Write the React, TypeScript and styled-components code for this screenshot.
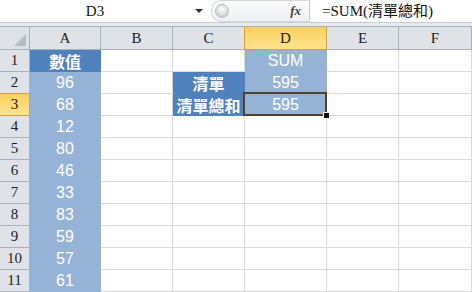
import React from 'react';
import styled, { createGlobalStyle } from 'styled-components';

const GlobalStyle = createGlobalStyle`
  html, body {
    margin: 0;
    padding: 0;
    background: #fff;
    overflow: hidden;
  }
`;

const Page = styled.div`
  width: 472px;
  height: 292px;
  overflow: hidden;
  display: flex;
  flex-direction: column;
  font-family: 'Liberation Serif', 'Noto Sans CJK TC', serif;
`;

const FormulaBar = styled.div`
  display: flex;
  align-items: center;
  height: 22px;
  border-bottom: 1px solid #c9cdd2;
  background: #fff;
  flex-shrink: 0;
`;

const NameBox = styled.div`
  width: 190px;
  text-align: center;
  font-size: 15px;
  color: #111;
`;

const DropArrow = styled.div`
  width: 0;
  height: 0;
  margin-left: 5px;
  border-left: 4px solid transparent;
  border-right: 4px solid transparent;
  border-top: 4px solid #333;
`;

const FxArea = styled.div`
  display: flex;
  align-items: center;
  height: 20px;
  margin-left: 8px;
  width: 97px;
  border-radius: 10px 0 0 10px;
  border: 1px solid #d2d5da;
  border-right: none;
  background: linear-gradient(#fbfbfb, #eef0f2);
`;

const Knob = styled.div`
  width: 12px;
  height: 12px;
  margin-left: 3px;
  border-radius: 50%;
  background: radial-gradient(circle at 50% 35%, #ffffff, #c9ccd1 80%);
  border: 1px solid #b8bcc2;
`;

const Fx = styled.span`
  margin-left: auto;
  margin-right: 8px;
  font-family: 'Liberation Serif', serif;
  font-style: italic;
  font-weight: bold;
  font-size: 13px;
  color: #444;
`;

const FormulaInput = styled.div`
  flex: 1;
  height: 22px;
  line-height: 22px;
  border-left: 1px solid #c8cbd0;
  padding-left: 12px;
  font-family: 'Liberation Serif', 'Noto Sans CJK TC', serif;
  font-size: 15px;
  color: #111;
  white-space: nowrap;
`;

const Gap = styled.div`
  height: 3px;
  background: #e6e9ed;
  flex-shrink: 0;
`;

const Sheet = styled.div`
  display: grid;
  grid-template-columns: 30px 71px 72px 72px 82px 72px 1fr;
  grid-template-rows: 23px repeat(12, 22px);
  border-top: 1px solid #abb1b9;
`;

const ColHead = styled.div<{ $active?: boolean }>`
  box-sizing: border-box;
  display: flex;
  align-items: center;
  justify-content: center;
  font-size: 15px;
  color: #222;
  background: ${(p) => (p.$active ? 'linear-gradient(#f9cf5f, #ffe48c)' : '#dfe3e8')};
  border-right: 1px solid ${(p) => (p.$active ? '#d9a03a' : '#abb1b9')};
  border-bottom: 1px solid ${(p) => (p.$active ? '#d9a03a' : '#abb1b9')};
  ${(p) => (p.$active ? 'border-left: 1px solid #d9a03a; margin-left: -1px;' : '')}
`;

const Corner = styled.div`
  box-sizing: border-box;
  position: relative;
  background: #dfe3e8;
  border-right: 1px solid #abb1b9;
  border-bottom: 1px solid #abb1b9;
  &::after {
    content: '';
    position: absolute;
    right: 3px;
    bottom: 3px;
    width: 12px;
    height: 12px;
    background: #b6bcc5;
    clip-path: polygon(100% 0, 100% 100%, 0 100%);
  }
`;

const RowHead = styled(ColHead)`
  font-size: 15px;
  ${(p) => (p.$active ? 'margin-left: 0; border-left: none; border-top: 1px solid #d9a03a; margin-top: -1px;' : '')}
`;

type Fill = 'dark' | 'light' | undefined;

const fills = { dark: '#4f81bd', light: '#95b3d7' };

const Cell = styled.div<{ $fill?: Fill; $selected?: boolean }>`
  box-sizing: border-box;
  position: relative;
  display: flex;
  align-items: center;
  justify-content: center;
  font-family: 'Liberation Sans', 'Noto Sans CJK TC', sans-serif;
  font-size: 16px;
  color: #fff;
  white-space: nowrap;
  background: ${(p) => (p.$fill ? fills[p.$fill] : '#fff')};
  border-right: 1px solid ${(p) => (p.$fill ? fills[p.$fill] : '#d9d9d9')};
  border-bottom: 1px solid ${(p) => (p.$fill ? fills[p.$fill] : '#d9d9d9')};
  z-index: ${(p) => (p.$selected ? 2 : 0)};
`;

const CellText = styled.span<{ $bold?: boolean }>`
  font-weight: ${(p) => (p.$bold ? 'bold' : 'normal')};
`;

const Selection = styled.div`
  position: absolute;
  top: -2px;
  left: -2px;
  right: -1px;
  bottom: -1px;
  border: 2px solid #54412b;
  pointer-events: none;
`;

const FillHandle = styled.div`
  position: absolute;
  right: -4px;
  bottom: -4px;
  width: 5px;
  height: 5px;
  background: #111;
  border: 1px solid #fff;
  border-width: 1px 0 0 1px;
`;

const columns = ['A', 'B', 'C', 'D', 'E', 'F'];

const values = ['數值', '96', '68', '12', '80', '46', '33', '83', '59', '57', '61'];

const cellData: Record<string, { text: string; fill: Fill; bold?: boolean }> = {
  C2: { text: '清單', fill: 'dark', bold: true },
  C3: { text: '清單總和', fill: 'dark', bold: true },
  D1: { text: 'SUM', fill: 'light' },
  D2: { text: '595', fill: 'light' },
  D3: { text: '595', fill: 'light' },
};

values.forEach((v, i) => {
  cellData[`A${i + 1}`] = { text: v, fill: i === 0 ? 'dark' : 'light', bold: i === 0 };
});

export default function App() {
  // row 12 only peeks in at the bottom edge, so its label is not drawn
  const rows = Array.from({ length: 12 }, (_, i) => i + 1);
  return (
    <Page>
      <GlobalStyle />
      <FormulaBar>
        <NameBox>D3</NameBox>
        <DropArrow />
        <FxArea>
          <Knob />
          <Fx>fx</Fx>
        </FxArea>
        <FormulaInput>=SUM(清單總和)</FormulaInput>
      </FormulaBar>
      <Gap />
      <Sheet>
        <Corner />
        {columns.map((c) => (
          <ColHead key={c} $active={c === 'D'}>
            {c}
          </ColHead>
        ))}
        {rows.map((r) => (
          <React.Fragment key={r}>
            <RowHead $active={r === 3}>{r < 12 ? r : ''}</RowHead>
            {columns.map((c) => {
              const id = `${c}${r}`;
              const d = cellData[id];
              const selected = id === 'D3';
              return (
                <Cell key={id} $fill={d?.fill} $selected={selected}>
                  {d && <CellText $bold={d.bold}>{d.text}</CellText>}
                  {selected && (
                    <Selection>
                      <FillHandle />
                    </Selection>
                  )}
                </Cell>
              );
            })}
          </React.Fragment>
        ))}
      </Sheet>
    </Page>
  );
}
